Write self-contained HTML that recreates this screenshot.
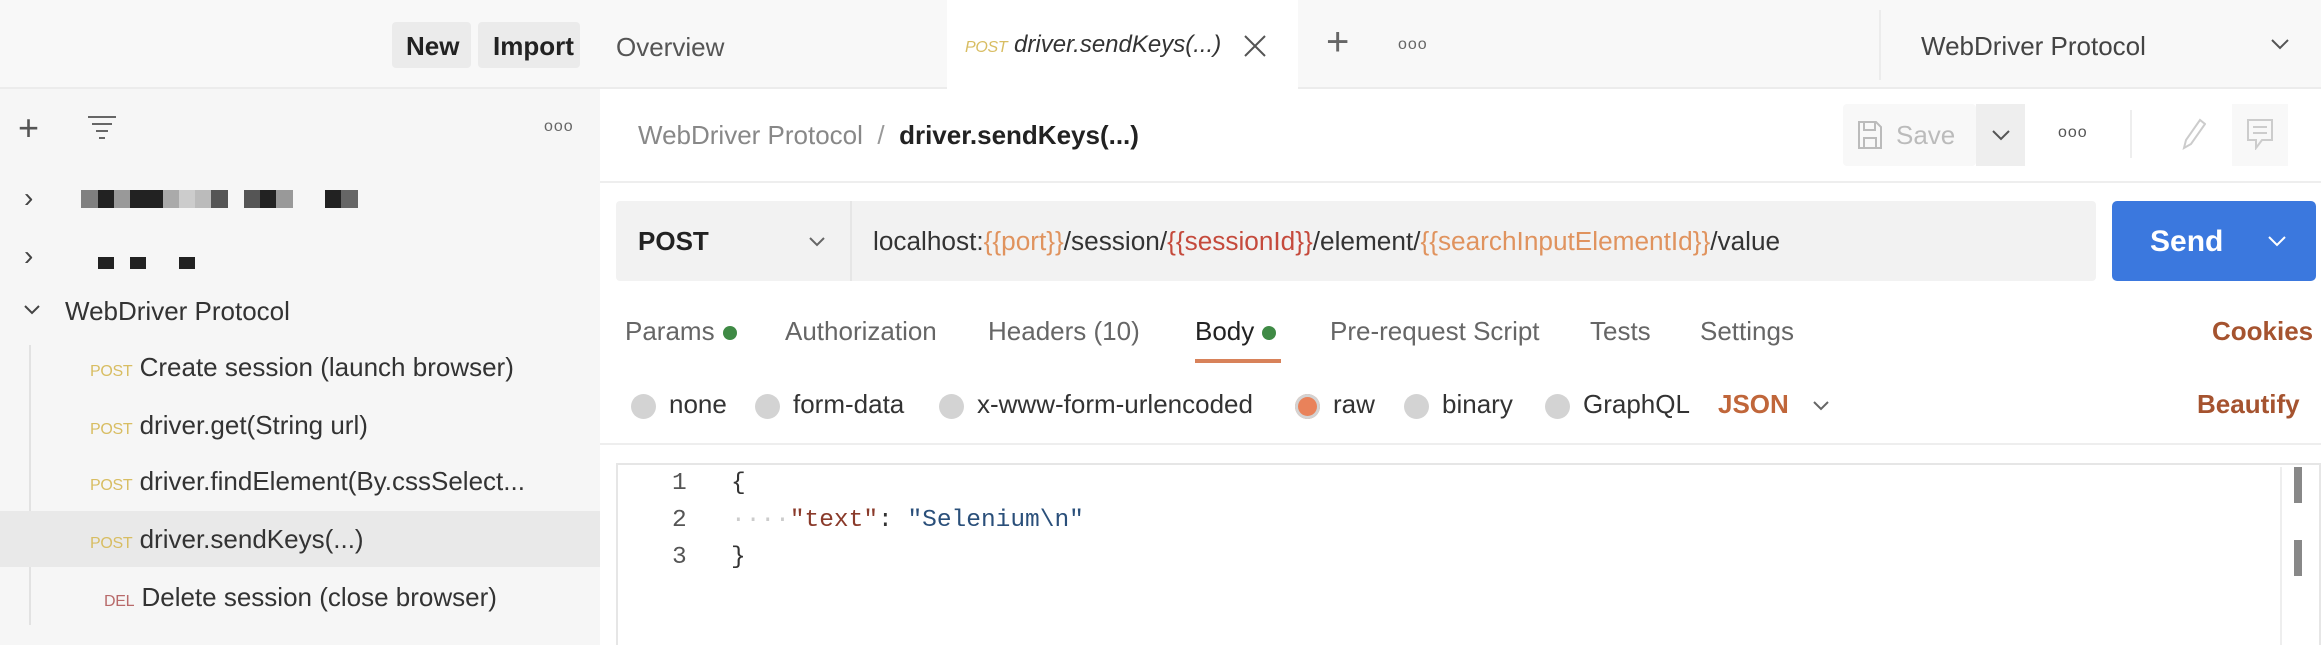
<!DOCTYPE html>
<html><head><meta charset="utf-8"><style>
*{margin:0;padding:0;box-sizing:border-box}
body{width:2321px;height:671px;background:#fff;font-family:"Liberation Sans",sans-serif;position:relative;overflow:hidden;color:#333}
.a{position:absolute;white-space:nowrap}
.side{left:0;top:0;width:600px;height:645px;background:#f6f6f6}
.t{font-size:26px;line-height:1}
.post{font-size:16px;color:#d8bd62;letter-spacing:-0.3px}
.dot{display:inline-block;width:14px;height:14px;border-radius:50%;background:#3f8a45;vertical-align:middle;margin-left:8px}
.radio{display:inline-block;width:25px;height:25px;border-radius:50%;background:#d3d3d3;vertical-align:middle;margin-right:13px}
.b{position:absolute;background:#222}
</style></head><body>
<!-- sidebar -->
<div class="a side"></div>
<div class="a" style="left:0;top:0;width:600px;height:89px;background:#f8f8f8;border-bottom:2px solid #ececec"></div>
<div class="a" style="left:392px;top:22px;width:79px;height:46px;background:#ebebeb;border-radius:4px"></div>
<div class="a t" style="left:406px;top:33px;font-weight:bold;color:#222">New</div>
<div class="a" style="left:478px;top:22px;width:102px;height:46px;background:#ebebeb;border-radius:4px"></div>
<div class="a t" style="left:493px;top:33px;font-weight:bold;color:#222">Import</div>
<div class="a" style="left:18px;top:110px;font-size:36px;line-height:1;color:#555;font-weight:300">+</div>
<svg class="a" style="left:86px;top:114px" width="34" height="28"><g stroke="#666" stroke-width="2"><line x1="2" y1="3" x2="30" y2="3"/><line x1="6" y1="10" x2="26" y2="10"/><line x1="10" y1="17" x2="22" y2="17"/><line x1="13" y1="24" x2="19" y2="24"/></g></svg>
<div class="a" style="left:544px;top:118px;font-size:16px;color:#666;letter-spacing:1px">ooo</div>
<div class="a" style="left:24px;top:182px;font-size:28px;color:#444">›</div>
<div class="a" style="left:24px;top:240px;font-size:28px;color:#444">›</div>
<div class="b" style="left:81px;top:190px;width:17px;height:18px;background:#808080"></div>
<div class="b" style="left:98px;top:190px;width:16px;height:18px"></div>
<div class="b" style="left:114px;top:190px;width:16px;height:18px;background:#999"></div>
<div class="b" style="left:130px;top:190px;width:33px;height:18px"></div>
<div class="b" style="left:163px;top:190px;width:16px;height:18px;background:#aaa"></div>
<div class="b" style="left:179px;top:190px;width:16px;height:18px;background:#ccc"></div>
<div class="b" style="left:195px;top:190px;width:16px;height:18px;background:#bbb"></div>
<div class="b" style="left:211px;top:190px;width:17px;height:18px;background:#555"></div>
<div class="b" style="left:244px;top:190px;width:16px;height:18px;background:#555"></div>
<div class="b" style="left:260px;top:190px;width:16px;height:18px"></div>
<div class="b" style="left:276px;top:190px;width:17px;height:18px;background:#999"></div>
<div class="b" style="left:325px;top:190px;width:16px;height:18px"></div>
<div class="b" style="left:341px;top:190px;width:17px;height:18px;background:#666"></div>
<div class="b" style="left:98px;top:257px;width:16px;height:12px"></div>
<div class="b" style="left:130px;top:257px;width:16px;height:12px"></div>
<div class="b" style="left:179px;top:257px;width:16px;height:12px"></div>
<svg class="a" style="left:23px;top:303px" width="18" height="14"><path d="M2 3 L9 10 L16 3" fill="none" stroke="#444" stroke-width="2"/></svg>
<div class="a t" style="left:65px;top:298px;color:#333">WebDriver Protocol</div>
<div class="a" style="left:29px;top:345px;width:2px;height:280px;background:#e2e2e2"></div>
<div class="a" style="left:0;top:511px;width:600px;height:56px;background:#e9e9e9"></div>
<div class="a t" style="left:90px;top:354px"><span class="post">POST</span> Create session (launch browser)</div>
<div class="a t" style="left:90px;top:412px"><span class="post">POST</span> driver.get(String url)</div>
<div class="a t" style="left:90px;top:468px"><span class="post">POST</span> driver.findElement(By.cssSelect...</div>
<div class="a t" style="left:90px;top:526px"><span class="post">POST</span> driver.sendKeys(...)</div>
<div class="a t" style="left:104px;top:584px"><span class="post" style="color:#b86a6a">DEL</span> Delete session (close browser)</div>
<!-- tabs bar -->
<div class="a" style="left:600px;top:0;width:1721px;height:89px;background:#f8f8f8;border-bottom:2px solid #ececec"></div>
<div class="a t" style="left:616px;top:34px;color:#555">Overview</div>
<div class="a" style="left:947px;top:0;width:351px;height:90px;background:#fff"></div>
<div class="a" style="left:965px;top:33px;font-size:24px;line-height:1;font-style:italic;color:#333"><span class="post" style="font-style:italic">POST</span> driver.sendKeys(...)</div>
<svg class="a" style="left:1243px;top:34px" width="24" height="24"><path d="M2 2L22 22M22 2L2 22" stroke="#555" stroke-width="2"/></svg>
<div class="a" style="left:1326px;top:22px;font-size:40px;line-height:1;color:#666;font-weight:300">+</div>
<div class="a" style="left:1398px;top:36px;font-size:16px;color:#666;letter-spacing:1px">ooo</div>
<div class="a" style="left:1879px;top:10px;width:2px;height:70px;background:#ececec"></div>
<div class="a t" style="left:1921px;top:33px;color:#444">WebDriver Protocol</div>
<svg class="a" style="left:2270px;top:38px" width="20" height="14"><path d="M2 2L10 10L18 2" fill="none" stroke="#555" stroke-width="2"/></svg>
<!-- breadcrumb -->
<div class="a t" style="left:638px;top:122px;color:#888">WebDriver Protocol <span style="color:#999">&nbsp;/&nbsp;</span> <span style="color:#222;font-weight:bold">driver.sendKeys(...)</span></div>
<div class="a" style="left:1843px;top:104px;width:133px;height:62px;background:#f8f8f8;border-radius:4px"></div>
<svg class="a" style="left:1857px;top:120px" width="26" height="30"><path d="M2 2H19L24 7V28H2Z M7 2V10H18V2 M7 28V18H19V28" fill="none" stroke="#bbb" stroke-width="2"/></svg>
<div class="a t" style="left:1896px;top:122px;color:#bbb">Save</div>
<div class="a" style="left:1976px;top:104px;width:49px;height:62px;background:#eeeeee"></div>
<svg class="a" style="left:1991px;top:129px" width="20" height="14"><path d="M2 2L10 10L18 2" fill="none" stroke="#555" stroke-width="2"/></svg>
<div class="a" style="left:2058px;top:124px;font-size:16px;color:#555;letter-spacing:1px">ooo</div>
<div class="a" style="left:2130px;top:110px;width:2px;height:48px;background:#eee"></div>
<svg class="a" style="left:2180px;top:116px" width="26" height="36"><path d="M4 32L6 24L20 4L25 8L11 28Z" fill="none" stroke="#ccc" stroke-width="2"/></svg>
<div class="a" style="left:2232px;top:104px;width:56px;height:62px;background:#f8f8f8"></div>
<svg class="a" style="left:2246px;top:118px" width="28" height="32"><path d="M2 2H26V22H16L10 30V22H2Z M7 9H21 M7 15H21" fill="none" stroke="#ccc" stroke-width="2"/></svg>
<div class="a" style="left:600px;top:181px;width:1721px;height:2px;background:#eeeeee"></div>
<!-- URL bar -->
<div class="a" style="left:616px;top:201px;width:1480px;height:80px;background:#f2f2f2;border-radius:4px"></div>
<div class="a" style="left:850px;top:201px;width:2px;height:80px;background:#e6e6e6"></div>
<div class="a t" style="left:638px;top:228px;font-weight:bold;color:#222">POST</div>
<svg class="a" style="left:808px;top:236px" width="18" height="12"><path d="M2 2L9 9L16 2" fill="none" stroke="#666" stroke-width="2"/></svg>
<div class="a t" style="left:873px;top:228px;font-size:26.2px;color:#333">localhost:<span style="color:#e0935e">{{port}}</span>/session/<span style="color:#c54a3c">{{sessionId}}</span>/element/<span style="color:#e0935e">{{searchInputElementId}}</span>/value</div>
<div class="a" style="left:2112px;top:201px;width:204px;height:80px;background:#3b78de;border-radius:5px"></div>
<div class="a" style="left:2150px;top:225px;font-size:30px;font-weight:bold;color:#fff">Send</div>
<svg class="a" style="left:2267px;top:235px" width="20" height="14"><path d="M2 2L10 10L18 2" fill="none" stroke="#fff" stroke-width="2"/></svg>
<!-- request tabs -->
<div class="a t" style="left:625px;top:318px;color:#666">Params<span class="dot"></span></div>
<div class="a t" style="left:785px;top:318px;color:#666">Authorization</div>
<div class="a t" style="left:988px;top:318px;color:#666">Headers (10)</div>
<div class="a t" style="left:1195px;top:318px;color:#222">Body<span class="dot"></span></div>
<div class="a" style="left:1195px;top:359px;width:86px;height:4px;background:#d8825a"></div>
<div class="a t" style="left:1330px;top:318px;color:#666">Pre-request Script</div>
<div class="a t" style="left:1590px;top:318px;color:#666">Tests</div>
<div class="a t" style="left:1700px;top:318px;color:#666">Settings</div>
<div class="a t" style="left:2212px;top:318px;color:#a5532f;font-weight:bold">Cookies</div>
<!-- radios -->
<div class="a t" style="left:631px;top:391px;color:#333"><span class="radio"></span>none</div>
<div class="a t" style="left:755px;top:391px;color:#333"><span class="radio"></span>form-data</div>
<div class="a t" style="left:939px;top:391px;color:#333"><span class="radio"></span>x-www-form-urlencoded</div>
<div class="a t" style="left:1295px;top:391px;color:#333"><span class="radio" style="background:#e9825a;box-shadow:0 0 0 3px #d3d3d3 inset"></span>raw</div>
<div class="a t" style="left:1404px;top:391px;color:#333"><span class="radio"></span>binary</div>
<div class="a t" style="left:1545px;top:391px;color:#333"><span class="radio"></span>GraphQL</div>
<div class="a t" style="left:1718px;top:391px;color:#c0663a;font-weight:bold">JSON</div>
<svg class="a" style="left:1812px;top:400px" width="18" height="12"><path d="M2 2L9 9L16 2" fill="none" stroke="#666" stroke-width="2"/></svg>
<div class="a t" style="left:2197px;top:391px;color:#a5532f;font-weight:bold">Beautify</div>
<div class="a" style="left:600px;top:443px;width:1721px;height:2px;background:#eeeeee"></div>
<!-- editor -->
<div class="a" style="left:616px;top:463px;width:1705px;height:182px;border:2px solid #e6e6e6;border-bottom:none;background:#fff"></div>
<div class="a" style="left:2294px;top:467px;width:8px;height:36px;background:#888"></div>
<div class="a" style="left:2294px;top:540px;width:8px;height:36px;background:#888"></div>
<div class="a" style="left:2280px;top:467px;width:2px;height:178px;background:#eee"></div>
<div class="a" style="font-family:'Liberation Mono',monospace;font-size:24.5px;line-height:37px;left:672px;top:465px;color:#555">1<br>2<br>3</div>
<div class="a" style="font-family:'Liberation Mono',monospace;font-size:24.5px;line-height:37px;left:731px;top:465px;color:#333">{<br><span style="color:#ccc">····</span><span style="color:#8a3a2a">"text"</span>: <span style="color:#2a4f7a">"Selenium\n"</span><br>}</div>
<div class="a" style="left:0;top:645px;width:2321px;height:26px;background:#fff"></div>
</body></html>
